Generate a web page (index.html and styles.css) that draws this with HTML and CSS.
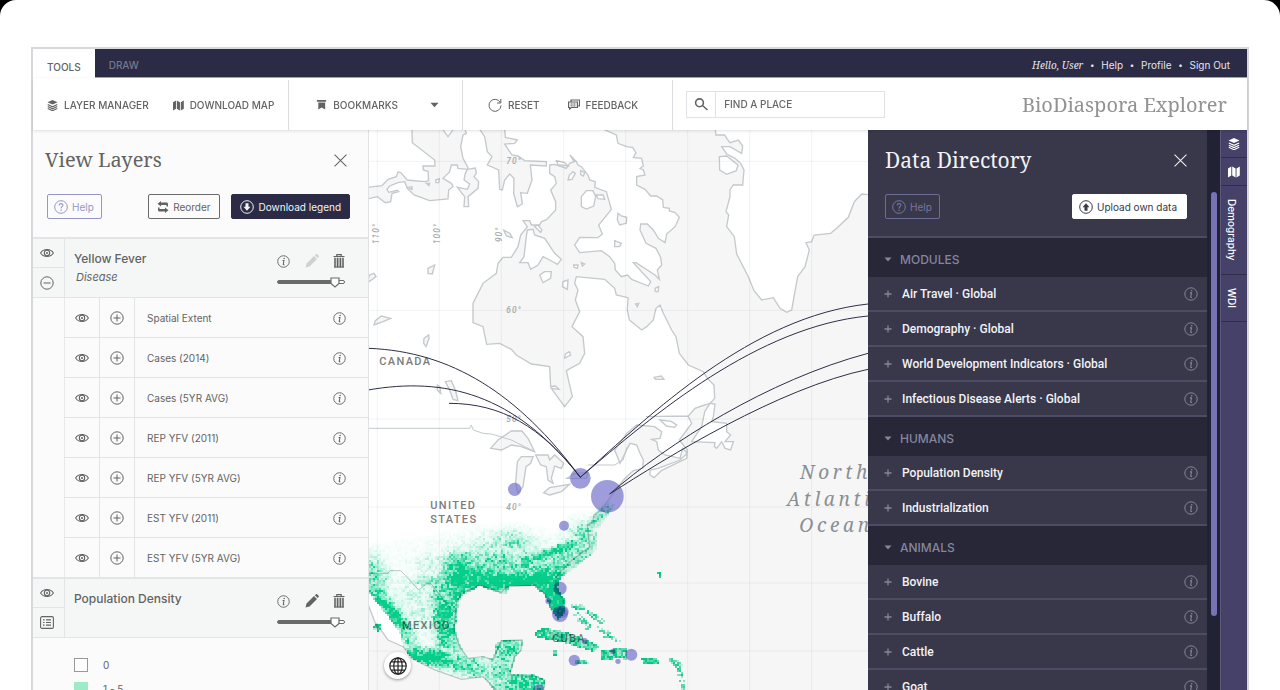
FILE: index.html
```html
<!doctype html>
<html lang="en">
<head>
    <meta charset="utf-8">
    <meta name="viewport" content="width=device-width, initial-scale=1">
    <title>BioDiaspora Explorer</title>
    <link rel="stylesheet" href="styles.css">
</head>

<body>
    <!-- icon sprite -->
    <svg class="sprite" aria-hidden="true">
        <symbol id="i-layers" viewBox="0 0 12 12"><path d="M6 0l5.500 2.500L6 5 .5 2.500z" fill="currentColor"/><path d="M.8 5L6 7.400 11.200 5M.8 7.200L6 9.600 11.200 7.200M.8 9.300L6 11.700 11.200 9.300" fill="none" stroke="currentColor" stroke-width="1.200"/></symbol>
        <symbol id="i-map" viewBox="0 0 12 12"><path d="M0 2.500L3.300.5v9L0 11.500zM4.200.5l3.400 2v9l-3.400-2zM8.500 2.500L11.800.5v9l-3.300 2z" fill="currentColor"/></symbol>
        <symbol id="i-bookmark" viewBox="0 0 12 12"><path d="M1 .5h10v2H1zM2.500 3.300h7.500V11L6.200 8.600 2.500 11z" fill="currentColor"/></symbol>
        <symbol id="i-caret" viewBox="0 0 10 6"><path d="M.5.5h9L5 5.500z" fill="currentColor"/></symbol>
        <symbol id="i-reset" viewBox="0 0 14 14"><path d="M12.300 4.500A6 6 0 1 0 13 7.500M12.800 1v4H9" fill="none" stroke="currentColor"/></symbol>
        <symbol id="i-feedback" viewBox="0 0 12 12"><path d="M3 2.500V1h8.500v6H10M.6 3h8.800v5.500H3.500L1.600 10V8.500h-1z" fill="none" stroke="currentColor" stroke-width="1.200"/><path d="M2 5h6M2 6.800h6M3.800 3.500v5M6.300 3.500v5" stroke="currentColor" stroke-width=".5"/></symbol>
        <symbol id="i-search" viewBox="0 0 14 13"><circle cx="5.500" cy="4.800" r="3.900" fill="none" stroke="currentColor" stroke-width="1.600"/><path d="M8.500 7.500l5 4.500" stroke="currentColor" stroke-width="1.500"/></symbol>
        <symbol id="i-eye" viewBox="0 0 14 10"><path d="M.6 5C3.500.4 10.500.4 13.400 5 10.500 9.600 3.500 9.600.6 5z" fill="none" stroke="currentColor" stroke-width="1.100"/><circle cx="7" cy="5" r="2.700" fill="none" stroke="currentColor" stroke-width="1.100"/><circle cx="7" cy="5" r="1" fill="currentColor"/></symbol>
        <symbol id="i-plus" viewBox="0 0 14 14"><circle cx="7" cy="7" r="6.200" fill="none" stroke="currentColor"/><path d="M3.500 7h7M7 3.500v7" stroke="currentColor"/></symbol>
        <symbol id="i-minus" viewBox="0 0 14 14"><circle cx="7" cy="7" r="6.200" fill="none" stroke="currentColor"/><path d="M3.500 7h7" stroke="currentColor"/></symbol>
        <symbol id="i-info" viewBox="0 0 14 14"><circle cx="7" cy="7" r="6.200" fill="none" stroke="currentColor"/><path d="M6 5.900h1.500L6.700 10c0 .8.6.6 1.200.2" fill="none" stroke="currentColor" stroke-width="1.100"/><circle cx="7.700" cy="3.800" r=".8" fill="currentColor"/></symbol>
        <symbol id="i-help" viewBox="0 0 14 14"><circle cx="7" cy="7" r="6.300" fill="none" stroke="currentColor"/><path d="M5.200 5.400C5.200 3 8.900 3 8.900 5.300 8.900 6.600 7.100 6.700 7.100 8.400" fill="none" stroke="currentColor" stroke-width="1.100"/><circle cx="7.100" cy="10.200" r=".8" fill="currentColor"/></symbol>
        <symbol id="i-pencil" viewBox="0 0 14 14"><path d="M.5 13.500l1-4L9 2l3 3-7.500 7.500zM9.800 1.200L11 .3c.4-.3.8-.3 1.100 0l1.500 1.500c.4.4.4.800 0 1.200l-.9 1.100z" fill="currentColor"/></symbol>
        <symbol id="i-trash" viewBox="0 0 12 14"><path d="M3.800 2V.6h4.400V2M.5 2.500h11" fill="none" stroke="currentColor" stroke-width="1.200"/><path d="M1.200 3.800h1.600v9.700H1.200zM3.700 3.800h1.800v9.700H3.700zM6.500 3.800h1.800v9.700H6.500zM9.200 3.800h1.600v9.700H9.200z" fill="currentColor"/><path d="M1.200 13h9.600" stroke="currentColor"/></symbol>
        <symbol id="i-list" viewBox="0 0 14 13"><rect x=".6" y=".6" width="12.800" height="11.800" rx="1.500" fill="none" stroke="currentColor" stroke-width="1.100"/><path d="M3 3.800h1.600M3 6.500h1.600M3 9.200h1.600M6 3.800h5M6 6.500h5M6 9.200h5" stroke="currentColor" stroke-width="1.200"/></symbol>
        <symbol id="i-close" viewBox="0 0 14 14"><path d="M.6.6l12.800 12.800M13.400.6L.6 13.400" stroke="currentColor" stroke-width="1.100"/></symbol>
        <symbol id="i-reorder" viewBox="0 0 12 12"><path d="M4 0v1.500h5.500c1 0 1.500.6 1.500 1.500v2.500H9.500V4H4v1.500L.5 2.800zM8 12v-1.500H2.500C1.500 10.500 1 9.900 1 9V6.500h1.500V8H8V6.500l3.500 2.800z" fill="currentColor"/></symbol>
        <symbol id="i-down" viewBox="0 0 14 14"><circle cx="7" cy="7" r="6.300" fill="none" stroke="currentColor"/><path d="M5.500 3.200h3v3.500h2L7 10.800 3.500 6.700h2z" fill="currentColor"/></symbol>
        <symbol id="i-up" viewBox="0 0 14 14"><circle cx="7" cy="7" r="6.300" fill="none" stroke="currentColor"/><path d="M5.500 10.800h3V7.300h2L7 3.200 3.500 7.300h2z" fill="currentColor"/></symbol>
        <symbol id="i-globe" viewBox="0 0 18 18"><g fill="none" stroke="currentColor" stroke-width="1.200"><circle cx="9" cy="9" r="8.200"/><ellipse cx="9" cy="9" rx="4.200" ry="8.200"/><path d="M9 .8v16.400M.8 9h16.400M2.200 4.800h13.600M2.200 13.200h13.600"/></g></symbol>
        <symbol id="i-add" viewBox="0 0 8 8"><path d="M.5 4h7M4 .5v7" stroke="currentColor" stroke-width="1.300"/></symbol>
    </svg>

    <div class="page">
        <div class="app">
            <header class="topbar">
                <nav class="modes">
                    <a class="mode active" href="#tools">TOOLS</a>
                    <a class="mode" href="#draw">DRAW</a>
                </nav>
                <nav class="account">
                    <em>Hello, User</em><i>•</i>
                    <a href="#help">Help</a><i>•</i>
                    <a href="#profile">Profile</a><i>•</i>
                    <a href="#signout">Sign Out</a>
                </nav>
            </header>

            <div class="toolbar">
                <div class="group group-layers">
                    <button class="tool"><svg width="11" height="11"><use href="#i-layers"/></svg>LAYER MANAGER</button>
                    <button class="tool"><svg width="11" height="11"><use href="#i-map"/></svg>DOWNLOAD MAP</button>
                </div>
                <div class="group group-marks">
                    <button class="tool"><svg width="11" height="12"><use href="#i-bookmark"/></svg>BOOKMARKS</button>
                    <button class="tool" aria-label="More bookmarks"><svg width="9" height="6"><use href="#i-caret"/></svg></button>
                </div>
                <div class="group group-reset">
                    <button class="tool"><svg width="14" height="14"><use href="#i-reset"/></svg>RESET</button>
                    <button class="tool"><svg width="12" height="12"><use href="#i-feedback"/></svg>FEEDBACK</button>
                </div>
                <form class="search">
                    <button type="button" aria-label="Search"><svg width="14" height="13"><use href="#i-search"/></svg></button>
                    <input type="text" aria-label="Find a place" placeholder="FIND A PLACE">
                </form>
                <h1 class="brand">BioDiaspora Explorer</h1>
            </div>

            <main class="workspace">
                <section class="layers">
                    <div class="panel-head">
                        <h2>View Layers</h2>
                        <button class="close" aria-label="Close layers"><svg width="13" height="13"><use href="#i-close"/></svg></button>
                        <div class="actions">
                            <button class="btn btn-help"><svg width="14" height="14"><use href="#i-help"/></svg>Help</button>
                            <button class="btn btn-line"><svg width="12" height="12"><use href="#i-reorder"/></svg>Reorder</button>
                            <button class="btn btn-dark"><svg width="14" height="14"><use href="#i-down"/></svg>Download legend</button>
                        </div>
                    </div>

                    <div class="layer">
                        <div class="layer-side">
                            <button aria-label="Show Yellow Fever"><svg width="14" height="10"><use href="#i-eye"/></svg></button>
                            <button aria-label="Collapse"><svg width="14" height="14"><use href="#i-minus"/></svg></button>
                        </div>
                        <div class="layer-name"><h3>Yellow Fever</h3><em>Disease</em></div>
                        <div class="layer-tools">
                            <button aria-label="Info"><svg width="13" height="13"><use href="#i-info"/></svg></button>
                            <button class="off" aria-label="Edit"><svg width="14" height="14"><use href="#i-pencil"/></svg></button>
                            <button aria-label="Delete"><svg width="12" height="14"><use href="#i-trash"/></svg></button>
                            <input type="range" aria-label="Yellow Fever opacity" min="0" max="100" value="92">
                        </div>
                    </div>
                    <ul class="sublayers">
                        <li><button aria-label="Show"><svg width="14" height="10"><use href="#i-eye"/></svg></button><button aria-label="Expand"><svg width="14" height="14"><use href="#i-plus"/></svg></button><span>Spatial Extent</span><button aria-label="Info"><svg width="13" height="13"><use href="#i-info"/></svg></button></li>
                        <li><button aria-label="Show"><svg width="14" height="10"><use href="#i-eye"/></svg></button><button aria-label="Expand"><svg width="14" height="14"><use href="#i-plus"/></svg></button><span>Cases (2014)</span><button aria-label="Info"><svg width="13" height="13"><use href="#i-info"/></svg></button></li>
                        <li><button aria-label="Show"><svg width="14" height="10"><use href="#i-eye"/></svg></button><button aria-label="Expand"><svg width="14" height="14"><use href="#i-plus"/></svg></button><span>Cases (5YR AVG)</span><button aria-label="Info"><svg width="13" height="13"><use href="#i-info"/></svg></button></li>
                        <li><button aria-label="Show"><svg width="14" height="10"><use href="#i-eye"/></svg></button><button aria-label="Expand"><svg width="14" height="14"><use href="#i-plus"/></svg></button><span>REP YFV (2011)</span><button aria-label="Info"><svg width="13" height="13"><use href="#i-info"/></svg></button></li>
                        <li><button aria-label="Show"><svg width="14" height="10"><use href="#i-eye"/></svg></button><button aria-label="Expand"><svg width="14" height="14"><use href="#i-plus"/></svg></button><span>REP YFV (5YR AVG)</span><button aria-label="Info"><svg width="13" height="13"><use href="#i-info"/></svg></button></li>
                        <li><button aria-label="Show"><svg width="14" height="10"><use href="#i-eye"/></svg></button><button aria-label="Expand"><svg width="14" height="14"><use href="#i-plus"/></svg></button><span>EST YFV (2011)</span><button aria-label="Info"><svg width="13" height="13"><use href="#i-info"/></svg></button></li>
                        <li><button aria-label="Show"><svg width="14" height="10"><use href="#i-eye"/></svg></button><button aria-label="Expand"><svg width="14" height="14"><use href="#i-plus"/></svg></button><span>EST YFV (5YR AVG)</span><button aria-label="Info"><svg width="13" height="13"><use href="#i-info"/></svg></button></li>
                    </ul>

                    <div class="layer">
                        <div class="layer-side">
                            <button aria-label="Show Population Density"><svg width="14" height="10"><use href="#i-eye"/></svg></button>
                            <button aria-label="Legend"><svg width="14" height="13"><use href="#i-list"/></svg></button>
                        </div>
                        <div class="layer-name"><h3>Population Density</h3></div>
                        <div class="layer-tools">
                            <button aria-label="Info"><svg width="13" height="13"><use href="#i-info"/></svg></button>
                            <button aria-label="Edit"><svg width="14" height="14"><use href="#i-pencil"/></svg></button>
                            <button aria-label="Delete"><svg width="12" height="14"><use href="#i-trash"/></svg></button>
                            <input type="range" aria-label="Population Density opacity" min="0" max="100" value="92">
                        </div>
                    </div>
                    <ul class="legend">
                        <li><i class="swatch"></i>0</li>
                        <li><i class="swatch swatch-1"></i>1 - 5</li>
                    </ul>
                </section>

                <section class="map" aria-label="Map">
                    <svg class="basemap" viewBox="3 0 1497 1680" preserveAspectRatio="xMinYMin slice">
                        <g class="water">
                            <path d="M132-5L133 38 200 90 201 108 165 108 166 120 180 124 182 152 170 155 118 150 98 128 90 126 85 140 60 148 42 167-5 172V208L28 200 52 218 68 215 72 190 92 185 88 181 62 187 57 178 65 168 90 158 110 155 118 175 138 195 185 212 240 207 242 180 255 170 250 160 225 145 245 125 250 105 268 105 270 115 298 118 300 113 285 85 278 50 285 15 295 10 290-5H258L240 20 222-5z"/>
                            <path d="M298 118L322 114 325 130 318 140 332 155 330 175 300 200 302 230 288 230 290 200 268 172 298 178 305 162 288 150 292 130z"/>
                            <path d="M333-5L350 20 358 65 372 80 358 105 392 120 395 178 403 180 410 150 425 132 438 145 437 190 448 230 463 222 458 188 478 190 492 150 487 105 535 108 535 95 470 92 450 78 432 75 410 42 440 40 448 30 412 22 410-5z"/>
                            <!-- Hudson Bay, Baffin Bay, the Atlantic and the Gulf -->
                            <path d="M545 105L560 103 575 108 595 115 605 100 618 95 606 75 625 95 630 105 640 110 660 135 665 150 682 155 680 172 715 185 730 238 692 285 703 312 690 323 635 322 620 345 635 368 700 362 725 380 740 400 742 420 760 440 778 435 791 448 841 468 848 455 796 398 804 398 861 435 874 448 868 420 881 405 878 382 864 355 834 340 816 300 818 282 838 282 856 300 871 325 891 338 896 312 921 290 934 262 921 248 904 243 904 235 886 232 884 210 866 198 848 198 831 178 806 165 806 140 831 135 826 120 816 115 826 108 821 85 796 82 804 68 794 52 776 50 762 45 750 40 745 15 700-5H1041L1044 15 1070 15 1076 25 1086 38 1111 30 1124 48 1121 70 1086 50 1061 50 1076 72 1101 85 1118 100 1128 120 1124 165 1096 165 1086 180 1086 200 1074 245 1082 255 1076 290 1099 320 1106 372 1141 440 1158 482 1181 510 1216 503 1236 535 1256 547 1271 540 1278 500 1289 440 1311 410 1324 360 1314 338 1331 335 1338 315 1388 310 1406 295 1441 262 1459 215 1481 192 1510 195V1690H525L530 1650 500 1638 425 1635 440 1580 460 1560 462 1530 400 1532 375 1590 345 1580 300 1585 275 1550 258 1500 265 1420 280 1390 335 1365 400 1388 415 1370 500 1365 530 1390 550 1440 570 1465 590 1450 585 1410 562 1370 565 1340 600 1300 665 1250 658 1185 675 1175 678 1155 700 1140 746 1075 771 1045 796 1022 824 1015 826 990 816 970 806 945 786 940 776 960 756 1000 740 960 776 910 806 885 860 890 881 905 876 925 851 928 866 935 871 960 891 975 936 985 944 955 958 970 936 990 871 1015 846 1020 846 1035 858 1043 880 1022 956 985 958 960 934 930 971 880 960 858 834 860 961 858 981 835 1001 828 1026 820 1040 805 1038 765 1018 745 1006 725 961 705 934 670 924 620 911 600 886 550 876 525 864 535 856 570 836 590 821 600 796 580 784 570 778 540 780 503 745 495 740 475 710 448 625 440 620 460 630 480 622 510 635 545 612 590 645 620 650 670 635 700 595 722 613 800 590 830 550 775 573 778 562 768 548 770 545 710 490 702 445 675 430 658 395 640 356 643 345 590 315 578 315 520 345 460 385 430 390 400 405 382 430 382 450 350 458 315 478 290 465 272 485 272 490 285 515 285 520 275 535 270 563 240 563 215 548 180 565 160 560 140 545 130z"/>
                            <path d="M-5 1410L30 1500 25 1480 60 1530 105 1550 130 1585 200 1620 280 1648 345 1640 395 1690H-5z"/>
                            <!-- lakes -->
                            <path d="M368 955L390 930 430 903 462 903 480 925 500 965 460 950 430 945 400 960z"/>
                            <path d="M443 1060L448 995 460 980 495 980 488 1000 474 1010 465 1070 450 1090z"/>
                            <path d="M503 975L540 975 545 990 560 975 587 1000 580 1015 560 1008 550 1045 555 1060 540 1050 535 1010 518 1005z"/>
                            <path d="M527 1088L545 1073 605 1063 580 1085 545 1095zM597 1045L620 1030 660 1028 655 1045z"/>
                            <path d="M180 415L200 405 193 432 180 430zM0 450L5 435 18 430 24 440 3 455zM18 585L22 572 40 558 68 565 45 575zM168 625L182 615 183 625 174 650 167 640zM232 755L250 752 262 780 270 812 255 808 245 780zM208 765L216 770 218 790 208 780zM407 300L425 310 433 323 415 318zM750 250L760 258 776 262 775 280 755 285 748 270zM740 332L760 340 755 350 740 350zM858 742L880 738 888 748 862 748z"/>
                        </g>
                        <g class="land">
                            <path d="M478 300L495 298 500 315 530 325 560 370 580 388 568 403 545 390 525 380 510 405 488 418 480 398 455 398 468 380 475 320z"/>
                            <path d="M640 200L655 182 675 182 683 200 677 228 655 237 640 230zM685 195L705 195 710 208 690 206zM600 150L604 135 615 125 622 130 612 148zM515 435L530 425 550 425 548 445 525 458zM585 455L600 450 598 478 583 470zM617 405L630 405 628 415 618 412zM640 398L650 402 643 408zM592 672L604 665 608 675 590 684zM565 92L590 98 600 108 570 104zM638 122L650 128 646 138 638 134zM500 290L510 285 522 300 518 307zM120 172L132 170 132 178zM175 160L185 160 183 167zM203 150L214 146 212 158 204 158z"/>
                            <path d="M1054 80L1076 78 1110 105 1105 122 1076 133 1055 120zM861 475L872 470 870 485 862 484zM803 522L812 520 808 530z"/>
                            <path d="M1041 822L1036 860 1031 875 1076 880 1076 905 1088 915 1071 935 1096 935 1088 960 1071 955 1061 935 1046 955 1039 950 1041 938 971 935 1001 890 1010 845 1026 820z"/>
                            <path d="M876 870L910 874 926 885 920 892 895 888z"/>
                        </g>
                        <path class="line" d="M0 895H305L310 885 316 900 345 910 370 912 430 930 500 965M660 1005H740L765 990 778 950M0 1330H60L66 1322 98 1322 125 1350 152 1380 175 1362 190 1362 235 1420 262 1450"/>
                        <path class="grid" d="M28 0V1680M214 0V1680M400 0V1680M587 0V1680M773 0V1680M959 0V1680M1145 0V1680M1331 0V1680M0 94H1500M0 541H1500M0 867H1500M0 1131H1500M0 1359H1500M0 1563H1500"/>
                        <g class="degrees">
                            <text x="415" y="103">70°</text>
                            <text x="415" y="550">60°</text>
                            <text x="415" y="876">50°</text>
                            <text x="415" y="1140">40°</text>
                            <text transform="translate(32 342) rotate(-90)">110°</text>
                            <text transform="translate(216 342) rotate(-90)">100°</text>
                            <text transform="translate(402 336) rotate(-90)">90°</text>
                        </g>
                        <g class="places">
                            <text x="34" y="706">CANADA</text>
                            <text x="187" y="1137">UNITED</text>
                            <text x="187" y="1178">STATES</text>
                            <text x="102" y="1496">MEXICO</text>
                            <text x="552" y="1536">CUBA</text>
                        </g>
                        <g class="ocean">
                            <text x="1296" y="1046">North</text>
                            <text x="1256" y="1127">Atlantic</text>
                            <text x="1294" y="1206">Ocean</text>
                        </g>
                        <g class="spots">
                            <circle cx="637" cy="1045" r="31"/>
                            <circle cx="718" cy="1099" r="49"/>
                            <circle cx="440" cy="1078" r="20"/>
                            <circle cx="588" cy="1187" r="15"/>
                            <circle cx="576" cy="1375" r="20"/>
                            <circle cx="576" cy="1452" r="24"/>
                            <circle cx="584" cy="1445" r="18"/>
                            <circle cx="573" cy="1450" r="14"/>
                            <circle cx="541" cy="1413" r="9"/>
                            <circle cx="619" cy="1591" r="17"/>
                            <circle cx="790" cy="1574" r="18"/>
                            <circle cx="650" cy="1533" r="9"/>
                            <circle cx="735" cy="1564" r="8"/>
                            <circle cx="750" cy="1594" r="8"/>
                            <circle cx="512" cy="1680" r="17"/>
                        </g>
                        <path class="routes" d="M3 655C250 665 450 790 637 1042M0 780C230 740 440 790 637 1042M243 820C400 820 520 890 637 1042C850 850 1150 560 1500 522M637 1042C860 850 1170 590 1500 558M1500 670C1200 750 900 940 725 1092C900 980 1230 775 1500 718"/>
                    </svg>
                    <canvas class="density" id="density" width="499" height="560"></canvas>
                    <button class="globe" aria-label="World view"><svg width="18" height="18"><use href="#i-globe"/></svg></button>
                </section>

                <section class="directory">
                    <div class="panel-head">
                        <h2>Data Directory</h2>
                        <button class="close" aria-label="Close directory"><svg width="13" height="13"><use href="#i-close"/></svg></button>
                        <div class="actions">
                            <button class="btn btn-help"><svg width="14" height="14"><use href="#i-help"/></svg>Help</button>
                            <button class="btn btn-white"><svg width="14" height="14"><use href="#i-up"/></svg>Upload own data</button>
                        </div>
                    </div>
                    <h3><svg width="8" height="5"><use href="#i-caret"/></svg>MODULES</h3>
                    <ul>
                        <li><button><svg width="8" height="8"><use href="#i-add"/></svg>Air Travel · Global</button><button aria-label="Info"><svg width="14" height="14"><use href="#i-info"/></svg></button></li>
                        <li><button><svg width="8" height="8"><use href="#i-add"/></svg>Demography · Global</button><button aria-label="Info"><svg width="14" height="14"><use href="#i-info"/></svg></button></li>
                        <li><button><svg width="8" height="8"><use href="#i-add"/></svg>World Development Indicators · Global</button><button aria-label="Info"><svg width="14" height="14"><use href="#i-info"/></svg></button></li>
                        <li><button><svg width="8" height="8"><use href="#i-add"/></svg>Infectious Disease Alerts · Global</button><button aria-label="Info"><svg width="14" height="14"><use href="#i-info"/></svg></button></li>
                    </ul>
                    <h3><svg width="8" height="5"><use href="#i-caret"/></svg>HUMANS</h3>
                    <ul>
                        <li><button><svg width="8" height="8"><use href="#i-add"/></svg>Population Density</button><button aria-label="Info"><svg width="14" height="14"><use href="#i-info"/></svg></button></li>
                        <li><button><svg width="8" height="8"><use href="#i-add"/></svg>Industrialization</button><button aria-label="Info"><svg width="14" height="14"><use href="#i-info"/></svg></button></li>
                    </ul>
                    <h3><svg width="8" height="5"><use href="#i-caret"/></svg>ANIMALS</h3>
                    <ul>
                        <li><button><svg width="8" height="8"><use href="#i-add"/></svg>Bovine</button><button aria-label="Info"><svg width="14" height="14"><use href="#i-info"/></svg></button></li>
                        <li><button><svg width="8" height="8"><use href="#i-add"/></svg>Buffalo</button><button aria-label="Info"><svg width="14" height="14"><use href="#i-info"/></svg></button></li>
                        <li><button><svg width="8" height="8"><use href="#i-add"/></svg>Cattle</button><button aria-label="Info"><svg width="14" height="14"><use href="#i-info"/></svg></button></li>
                        <li><button><svg width="8" height="8"><use href="#i-add"/></svg>Goat</button><button aria-label="Info"><svg width="14" height="14"><use href="#i-info"/></svg></button></li>
                    </ul>
                </section>
                <div class="scroll"><div class="thumb"></div></div>
                <nav class="tabs">
                    <a class="tab-icon" href="#layers" aria-label="Layers"><svg width="12" height="12"><use href="#i-layers"/></svg></a>
                    <a class="tab-icon" href="#map" aria-label="Map"><svg width="12" height="12"><use href="#i-map"/></svg></a>
                    <a href="#demography">Demography</a>
                    <a href="#wdi">WDI</a>
                </nav>
            </main>
        </div>
    </div>
    <script src="map.js"></script>
</body>
</html>
```
FILE: styles.css
```css
* {
  box-sizing: border-box;
}

body {
  margin: 0;
  background: #000;
  font-family: Inter, "Liberation Sans", sans-serif;
  font-size: 10px;
  color: #636363;
}

h1, h2, h3, ul {margin: 0; padding: 0; font-weight: normal;}
ul {list-style: none;}
a {color: inherit; text-decoration: none;}
svg {flex: none;}

button {
  display: flex;
  align-items: center;
  justify-content: center;
  padding: 0;
  border: 0;
  background: none;
  color: inherit;
  font: inherit;
  cursor: pointer;
}

.sprite {
  position: absolute;
  width: 0;
  height: 0;
}

.page {
  display: flex;
  height: 100vh;
  padding: 47px 31px 0;
  border-radius: 16px 16px 0 0;
  background: #fff;
  overflow: hidden;
}

.app {
  display: flex;
  flex: 1;
  flex-direction: column;
  min-width: 0;
  border: 2px solid #d8d8dc;
  border-bottom: 0;
}

/* Top bar */
.topbar {
  display: flex;
  justify-content: space-between;
  height: 29px;
  background: #2b2b45;
  border-bottom: 1px solid #a5a4b8;
}

.modes {display: flex;}

.mode {
  padding: 9px 14px;
  font-weight: 500;
  line-height: 14px;
  color: #77778c;
}

.mode.active {
  height: 29px;
  padding-top: 11px;
  background: #fff;
  color: #636363;
}

.account {
  display: flex;
  align-items: center;
  padding: 4px 17px 0 0;
  color: #e4e4ec;
}

.account em {font: italic 10px "Noto Serif", "Droid Serif", "DejaVu Serif Condensed", serif;}
.account i {width: 18px; text-align: center; font-size: 8px; font-style: normal;}

/* Toolbar */
.toolbar {
  display: flex;
  height: 52px;
  align-items: center;
  z-index: 1;
  box-shadow: 0 1px 3px rgba(0,0,0,0.12);
}

.group {
  display: flex;
  align-self: stretch;
  gap: 24px;
  margin-top: 2px;
  padding: 0 14px;
  border-right: 1px solid #dcdce0;
}

.group-marks {gap: 32px; padding: 0 23px 0 27px;}
.group-reset {gap: 28px; padding: 0 34px 0 25px;}

.tool {
  gap: 6px;
  font-weight: 500;
  white-space: nowrap;
}

.search {
  display: flex;
  width: 199px;
  height: 27px;
  margin-left: 13px;
  border: 1px solid #e2e2e4;
}

.search button {width: 29px; border-right: 1px solid #e2e2e4;}

.search input {
  flex: 1;
  min-width: 0;
  padding: 0 8px;
  border: 0;
  font: inherit;
  font-weight: 500;
}

.search input::placeholder {color: #666;}

.brand {
  margin-left: auto;
  padding-right: 20px;
  font: 20px "Noto Serif", "Droid Serif", "DejaVu Serif Condensed", serif;
  color: #929292;
}

/* Panels */
.workspace {
  display: flex;
  flex: 1;
  min-height: 0;
}

.panel-head {
  display: flex;
  flex-wrap: wrap;
  align-content: flex-start;
  align-items: center;
  justify-content: space-between;
  height: 107px;
  padding: 15px 18px 0 12px;
}

.panel-head h2 {
  font: 20px/30px "Noto Serif", "Droid Serif", "DejaVu Serif Condensed", serif;
}

.close {width: 20px; height: 30px;}

.actions {
  display: flex;
  gap: 11px;
  width: 100%;
  padding: 19px 0 0 2px;
}

.btn {
  gap: 4px;
  height: 25px;
  padding: 0 8px;
  border: 1px solid #6a6a6a;
  border-radius: 2px;
  white-space: nowrap;
}

.btn-help {
  margin-right: auto;
  padding: 0 7px 0 6px;
  border-color: #9796c4;
  color: #9796c4;
}

.btn-dark {gap: 5px; background: #2b2b45; border-color: #2b2b45; color: #f4f4f8;}
.btn-white {background: #fff; border-color: #fff; color: #38384a; padding: 0 9px 0 6px;}

.layers {
  flex: none;
  width: 336px;
  background: #fbfbfb;
  border-right: 1px solid #dfe2e2;
  overflow: hidden;
}

.layer {
  display: flex;
  height: 61px;
  background: #f5f7f7;
  border-top: 2px solid #e2e5e5;
  border-bottom: 1px solid #e2e5e5;
}

.layer-side {
  display: grid;
  grid-template-rows: 1fr 1fr;
  width: 32px;
  border-right: 1px solid #e2e5e5;
}

.layer-side button {padding-right: 3px;}
.layer-side button:first-child {border-bottom: 1px solid #e2e5e5;}

.layer-name {
  flex: 1;
  padding: 12px 0 0 9px;
}

.layer-name h3 {font: 500 12px/16px Inter, sans-serif;}
.layer-name em {display: block; padding-left: 2px; font-size: 11px; line-height: 20px;}

.layer-tools {
  display: grid;
  grid-template-columns: 13px 14px 12px;
  justify-content: space-between;
  align-content: start;
  width: 68px;
  margin: 13px 23px 0 0;
}

.layer-tools button {height: 18px;}
.layer-tools .off {color: #cfd1d1;}

.layer-tools input {
  grid-column: span 3;
  appearance: none;
  width: 68px;
  height: 11px;
  margin: 6px 0 0;
  background: none;
}

.layer-tools input::-webkit-slider-runnable-track {
  height: 4px;
  border: 1px solid #6a6a6a;
  border-radius: 2px;
  background: linear-gradient(90deg, #6a6a6a 86%, #fff 86%);
}

.layer-tools input::-webkit-slider-thumb {
  appearance: none;
  width: 10px;
  height: 11px;
  margin-top: -4px;
  background: url("data:image/svg+xml,%3Csvg xmlns='http://www.w3.org/2000/svg' viewBox='0 0 10 11'%3E%3Cpath d='M1 1h8v5.500L5 10 1 6.500z' fill='%23fff' stroke='%236a6a6a' stroke-width='1.200'/%3E%3C/svg%3E");
}

.sublayers {
  padding-left: 31px;
}

.sublayers li {
  display: grid;
  grid-template-columns: 35px 35px 1fr 58px;
  height: 40px;
  border-left: 1px solid #e8eaea;
  border-bottom: 1px solid #e2e5e5;
}

.sublayers li:last-child {height: 39px; border-bottom: 0;}
.sublayers li > button:nth-child(-n+2) {border-right: 1px solid #e2e5e5;}
.sublayers span {padding-left: 12px; line-height: 40px;}

.legend {padding: 15px 0 0 41px;}
.legend li {display: flex; align-items: center; gap: 15px; height: 24px;}

.swatch {
  width: 14px;
  height: 14px;
  border: 1px solid #999;
  background: #fff;
}

.swatch-1 {background: #9ceac6; border-color: #9ceac6;}

/* Map */
.map {
  position: relative;
  flex: 1;
  min-width: 0;
  background: #fff;
  overflow: hidden;
}

.basemap, .density {
  position: absolute;
  inset: 0;
  width: 100%;
  height: 100%;
}

.density {
  object-fit: cover;
  object-position: left top;
  mix-blend-mode: multiply;
}

.water path {fill: #f6f6f6; stroke: #c3c9cc; stroke-width: 4;}
.land path {fill: #fff; stroke: #c3c9cc; stroke-width: 4;}
.line {fill: none; stroke: #c3c9cc; stroke-width: 3;}
.grid {fill: none; stroke: #000; stroke-opacity: .05; stroke-width: 3;}
.degrees text {font: italic 500 25px Roboto, sans-serif; letter-spacing: 3px; fill: #a4a7a9;}
.places text {font: 500 33px Roboto, sans-serif; letter-spacing: 4px; fill: #7c7c7c;}
.ocean text {font: italic 57px "Noto Serif", "Droid Serif", "DejaVu Serif Condensed", serif; letter-spacing: 11px; fill: #8a8f92;}
.spots circle {fill: #6b67c8; fill-opacity: .65;}
.routes {fill: none; stroke: #2f2e48; stroke-width: 3;}

.globe {
  position: absolute;
  left: 15px;
  top: 522px;
  width: 27px;
  height: 27px;
  border-radius: 50%;
  background: #fff;
  color: #222;
  box-shadow: 0 1px 3px rgba(0,0,0,0.4);
}

/* Data directory */
.directory {
  flex: none;
  width: 339px;
  background: #38384a;
  color: #f2f2f6;
  overflow: hidden;
}

.directory .panel-head {
  height: 108px;
  padding-left: 17px;
  padding-right: 17px;
  border-bottom: 2px solid #4c4c64;
}

.directory h2 {font-size: 21px;}
.directory .actions {padding: 19px 3px 0 0;}
.directory .btn-help {border-color: #6d6c96; color: #77769f;}

.directory h3 {
  display: flex;
  align-items: center;
  gap: 8px;
  height: 39px;
  padding: 3px 16px 0;
  background: #272738;
  font: 500 12px Inter, sans-serif;
  color: #85859c;
}

.directory li {
  display: flex;
  justify-content: space-between;
  height: 35px;
  padding: 0 9px 0 16px;
  border-bottom: 2px solid #4c4c64;
}

.directory li button {gap: 10px;}
.directory li svg {color: #85859c;}
.directory li button:first-child {font: 500 12px Roboto, sans-serif;}

.scroll {
  flex: none;
  width: 13px;
  padding: 62px 3px 0 4px;
  background: #222235;
}

.thumb {
  height: 424px;
  border-radius: 3px;
  background: #7672b4;
}

.tabs {
  flex: none;
  width: 27px;
  background: #454168;
  border-left: 1px solid #5c587c;
  color: #fff;
}

.tabs a {
  display: flex;
  align-items: center;
  padding: 13px 9px 13px 5px;
  border-bottom: 1px solid #302e4a;
  writing-mode: vertical-rl;
  font-weight: 500;
  line-height: 12px;
}

.tabs .tab-icon {padding: 8px 7px 7px;}
```
FILE: map.js
```js
// population density raster, drawn in 2px cells
var canvas = document.getElementById("density");
var ctx = canvas.getContext("2d");

// land outlines, three units to a pixel
var mainland = new Path2D("M0 1080L745 1120 715 1165 690 1200 685 1260 625 1312 580 1340 568 1370 590 1410 592 1450 570 1468 550 1440 530 1395 500 1370 425 1370 415 1395 390 1388 335 1368 285 1395 272 1420 262 1500 278 1550 302 1585 345 1580 375 1585 385 1540 405 1528 465 1530 460 1560 442 1580 427 1632 500 1634 532 1650 525 1690H385L345 1640 280 1648 200 1620 130 1585 105 1550 95 1510 60 1460 20 1410 0 1380z");
var islands = new Path2D("M500 1508L530 1492 600 1508 650 1528 695 1550 680 1567 620 1548 560 1530 505 1524zM700 1560L780 1553 778 1595 760 1585 700 1590zM620 1588L665 1594 655 1605 620 1600zM821 1586L860 1583 876 1592 870 1600 825 1600zM20 1480L40 1485 35 1505 15 1500zM553 1563H568V1577H553z");
var arcs = [
    [605, 1425, 640, 1430, 14], [620, 1450, 660, 1490, 20], [650, 1440, 705, 1480, 10],
    [680, 1490, 745, 1530, 14], [900, 1590, 930, 1605, 18], [925, 1605, 944, 1680, 12],
    [868, 1325, 870, 1335, 5]
];

// x, y, radius x, radius y, angle, strength
var blobs = [
    [300, 1290, 300, 70, 0, .07], [400, 1275, 160, 55, 0, .38], [430, 1240, 70, 35, 0, .55],
    [420, 1310, 200, 50, 0, .75], [275, 1340, 42, 55, 0, 2.6], [335, 1345, 60, 36, 0, 2.2],
    [460, 1356, 200, 24, 0, 3.2], [530, 1330, 70, 40, -.3, 1.2],
    [565, 1262, 100, 14, -.35, 1.6], [600, 1285, 100, 50, -.6, .7],
    [690, 1165, 50, 16, -.7, .7], [645, 1225, 40, 45, 0, .65], [565, 1405, 45, 75, 0, 3],
    [235, 1465, 36, 95, -.15, 1.8], [150, 1430, 130, 90, 0, .22], [15, 1350, 40, 60, 0, .8],
    [55, 1430, 20, 100, -.7, 2], [115, 1530, 30, 60, -.4, .9], [180, 1582, 85, 22, .15, 2.4],
    [290, 1605, 80, 30, .3, .9], [425, 1555, 60, 50, 0, 1], [400, 1630, 70, 40, 0, .8],
    [470, 1665, 90, 40, 0, 1.3]
];

var seed = 7;
function rnd() {
    seed = (seed * 16807) % 2147483647;
    return seed / 2147483647;
}

// coarse noise so that neighbouring cells clump together
var coarse = [];
for (var i = 0; i < 4000; i++) coarse.push(.5 + rnd());

function strength(x, y) {
    var v = 0;
    blobs.forEach(function (b) {
        var c = Math.cos(b[4]), s = Math.sin(b[4]);
        var dx = x - b[0], dy = y - b[1];
        var u = (dx * c + dy * s) / b[2], w = (dy * c - dx * s) / b[3];
        v = Math.max(v, b[5] * Math.exp(-u * u - w * w));
    });
    return v;
}

function cell(px, py, a) {
    ctx.fillStyle = "rgba(5,206,138," + Math.min(a, 1).toFixed(2) + ")";
    ctx.fillRect(px, py, 2, 2);
}

for (var py = 370; py < 560; py += 2) {
    for (var px = 0; px < 330; px += 2) {
        var x = px * 3 + 6, y = py * 3 + 3, r = rnd(), v = 0;
        if (ctx.isPointInPath(mainland, x, y)) v = strength(x, y);
        if (ctx.isPointInPath(islands, x, y)) v = 1.1;
        if (v < .02) continue;
        v *= coarse[(px >> 2) + (py - 370 >> 2) * 83];
        cell(px, py, v * (.4 + 1.1 * r * r));
    }
}

arcs.forEach(function (a) {
    for (var i = 0; i < 32; i++) {
        var t = rnd();
        var ax = a[0] + (a[2] - a[0]) * t + (rnd() - .5) * a[4];
        var ay = a[1] + (a[3] - a[1]) * t + (rnd() - .5) * a[4];
        cell(Math.round(ax / 6) * 2, Math.round(ay / 6) * 2, .2 + rnd() * .6);
    }
});
```
